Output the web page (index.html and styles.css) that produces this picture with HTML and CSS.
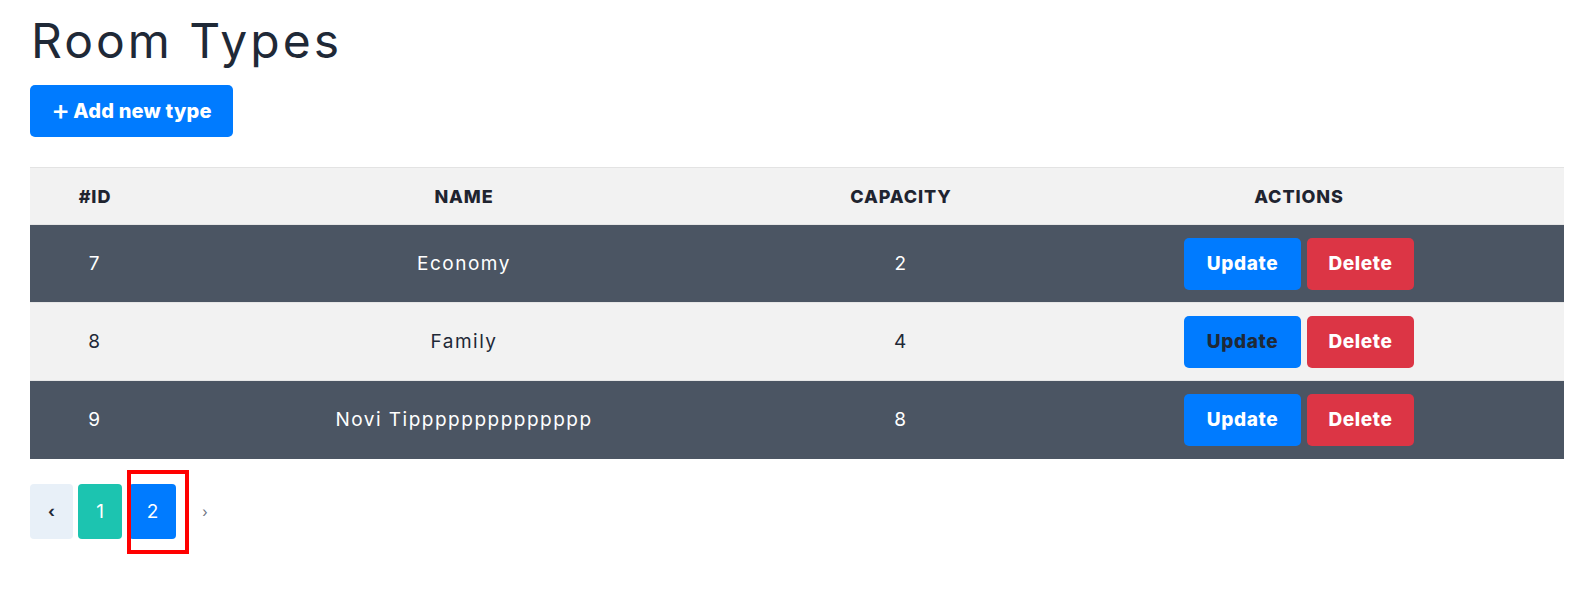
FILE: index.html
```html
<!DOCTYPE html>
<html lang="en">
<head>
<meta charset="utf-8">
<title>Room Types</title>
<link rel="stylesheet" href="styles.css">
</head>
<body>
<main class="page">
  <h1 class="title">Room Types</h1>
  <button class="btn btn-add"><span class="plus">+</span> Add new type</button>
  <table class="types">
    <colgroup>
      <col class="c-id"><col class="c-name"><col class="c-cap"><col class="c-act">
    </colgroup>
    <thead>
      <tr><th>#ID</th><th>NAME</th><th>CAPACITY</th><th>ACTIONS</th></tr>
    </thead>
    <tbody>
      <tr class="dark">
        <td>7</td><td>Economy</td><td>2</td>
        <td><div class="actions"><button class="btn btn-upd">Update</button><button class="btn btn-del">Delete</button></div></td>
      </tr>
      <tr class="light">
        <td>8</td><td>Family</td><td>4</td>
        <td><div class="actions"><button class="btn btn-upd dark-text">Update</button><button class="btn btn-del">Delete</button></div></td>
      </tr>
      <tr class="dark">
        <td>9</td><td>Novi Tipppppppppppppp</td><td>8</td>
        <td><div class="actions"><button class="btn btn-upd">Update</button><button class="btn btn-del">Delete</button></div></td>
      </tr>
    </tbody>
  </table>
  <nav class="pager">
    <span class="pg pg-prev">‹</span>
    <span class="pg pg-one">1</span>
    <span class="pg pg-cur">2</span>
    <span class="pg pg-next">›</span>
  </nav>
</main>
</body>
</html>
```
FILE: styles.css
```css
* { box-sizing: border-box; }
html, body { margin: 0; background: #fff; }
html { min-height: 100%; }
body {
  font-family: Inter, "Open Sans", "Liberation Sans", sans-serif;
  color: #1f2937;
}
.page { padding: 9px 30px 40px 30px; }
.title {
  margin: 0;
  font-size: 48px;
  font-weight: 400;
  line-height: 64px;
  letter-spacing: 3px;
  padding-left: 1px;
}
.btn {
  font-family: inherit;
  border: 0;
  border-radius: 5px;
  color: #fff;
  font-weight: 800;
  cursor: pointer;
}
.btn-add {
  margin-top: 12px;
  width: 203px;
  height: 52px;
  background: #007bff;
  font-size: 20px;
  letter-spacing: 0.2px;
  display: flex;
  align-items: center;
  justify-content: center;
  gap: 3px;
}
.plus { font-weight: 500; font-size: 28px; line-height: 1; margin-top: -3px; }
.types {
  margin-top: 30px;
  width: 1534px;
  border-collapse: collapse;
  table-layout: fixed;
  border-top: 1px solid #e3e3e3;
}
.c-id { width: 130px; }
.c-name { width: 608px; }
.c-cap { width: 266px; }
.c-act { width: 530px; }
th {
  background: #f2f2f2;
  height: 57px;
  font-size: 18px;
  font-weight: 800;
  color: #1f2430;
  text-align: center;
  padding: 0;
  letter-spacing: 0.9px;
}
td {
  text-align: center;
  font-size: 19px;
  letter-spacing: 1.5px;
  height: 78px;
  padding: 0;
  border-top: 1px solid #e6e6e6;
}
tr.dark td { background: #4b5563; color: #fff; }
tr.light td { background: #f2f2f2; color: #1f2937; }
.actions { display: flex; justify-content: center; gap: 6px; }
.btn-upd, .btn-del {
  height: 52px;
  font-size: 19px;
  letter-spacing: 0.6px;
}
.btn-upd { width: 117px; background: #007bff; }
.btn-del { width: 107px; background: #dc3545; }
.btn-upd.dark-text { color: #1f2937; }
.pager {
  margin-top: 25px;
  display: flex;
  align-items: center;
  gap: 5px;
}
.pg {
  width: 43px;
  height: 55px;
  border-radius: 4px;
  display: flex;
  align-items: center;
  justify-content: center;
  font-size: 19px;
  color: #fff;
  position: relative;
}
.pg-prev { background: #e8f0f8; color: #1f2937; font-size: 16px; font-weight: 700; }
.pg-one { background: #1cc4b0; width: 44px; }
.pg-cur { background: #007bff; width: 47px; margin-left: 2px; }
.pg-cur::after {
  content: "";
  position: absolute;
  left: -2px;
  right: -13px;
  top: -14px;
  bottom: -15px;
  border: 4px solid #f00;
  pointer-events: none;
}
.pg-next { background: transparent; color: #6b7280; font-size: 14px; width: 48px; }
```
